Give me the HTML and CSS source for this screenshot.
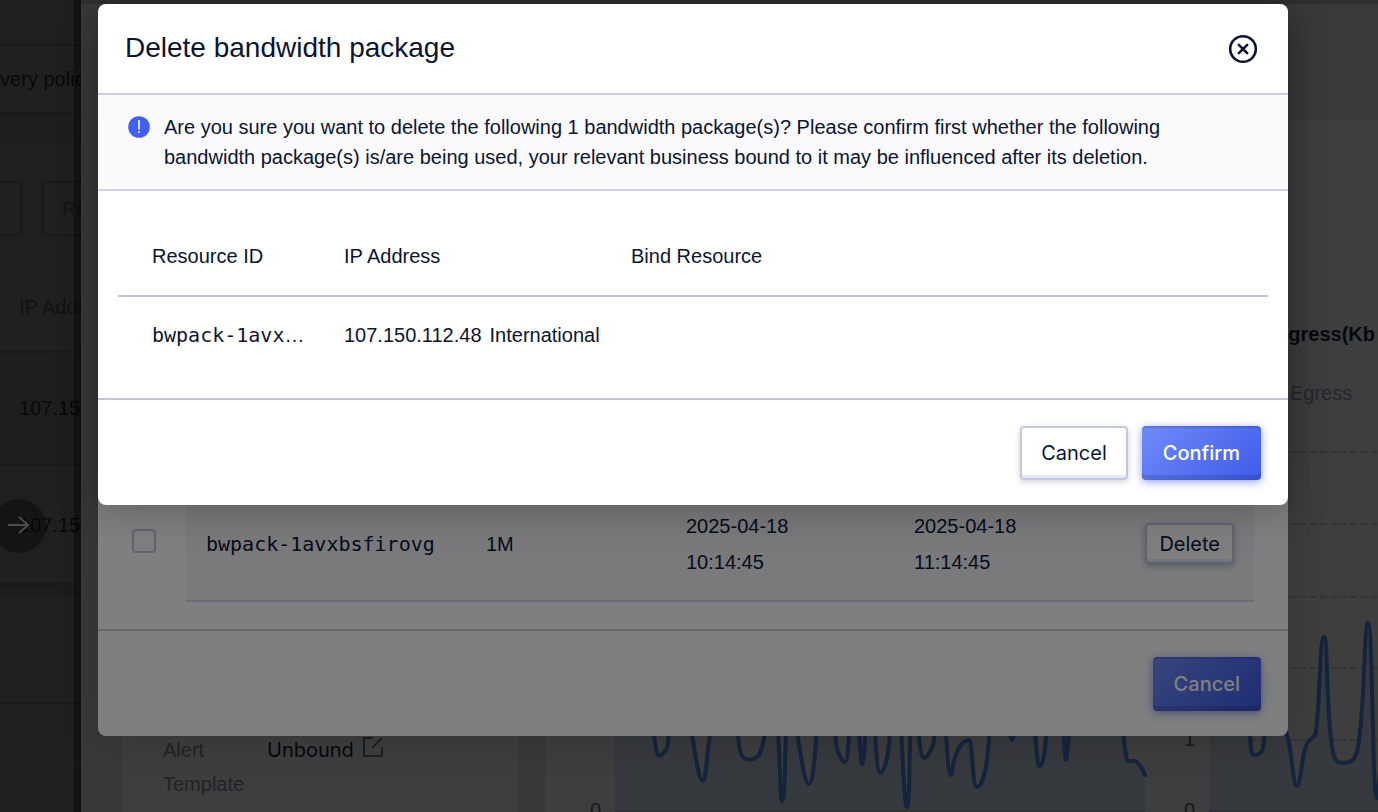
FILE: index.html
```html
<!DOCTYPE html>
<html lang="en">
<head>
    <meta charset="UTF-8">
    <meta name="viewport" content="width=device-width, initial-scale=1.0">
    <title>Bandwidth package</title>
    <link rel="stylesheet" href="styles.css">
</head>
<body>
    <!-- Page and drawer, both dimmed -->
    <div class="page">
        <div class="list">
            <div class="list-top"></div>
            <div class="list-tabs"><span>overy policy</span></div>
            <div class="list-gap"></div>
            <div class="list-tools">
                <span class="tool"></span>
                <span class="tool tool-text">Re</span>
            </div>
            <div class="list-row list-head">IP Address</div>
            <div class="list-row list-odd">107.150</div>
            <div class="list-row">107.155</div>
            <div class="list-band"></div>
            <div class="list-foot"></div>
            <button class="arrow-btn" aria-label="Expand">
                <svg width="22" height="20" viewBox="0 0 22 20"><path d="M0 10H20M11 2L20 10L11 18" /></svg>
            </button>
        </div>
        <div class="drawer">
            <div class="drawer-head"></div>
            <div class="drawer-body">
                <div class="panel info">
                    <dl>
                        <dt>Alert Template</dt>
                        <dd>Unbound
                            <svg width="20" height="20" viewBox="0 0 20 20"><path d="M10 1H1V19H19V10M9 11L19 1" /></svg>
                        </dd>
                    </dl>
                </div>
                <div class="panel chart">
                    <svg width="833" height="692" viewBox="545 120 833 692">
                        <g class="grid">
                            <path d="M1210 452H1378M1210 524H1378M1210 597H1378M1210 668H1378M1210 740H1378" />
                        </g>
                        <path class="area" d="M615 700H650C653 720 655 756 659 756C660 756 665 752 667 748C669 742 670 700 680 700C692 700 695 781 703 781C708 781 707 700 725 700C738 700 737 745 741 754C744 761 752 761 757 757C768 748 764 700 771 700C781 700 779 801 782 801C787 801 783 700 791 700C797 700 796 728 799 745C802 762 805 784 809 784C816 784 815 700 825 700C836 700 834 744 838 752C840 757 843 762 845 762C850 762 848 700 854 700C859 700 860 764 862 764C866 764 864 700 870 700C876 700 875 773 880 773C884 773 888 757 889 744C891 720 892 700 897 700C902 700 903 807 907 807C911 807 908 700 914 700C918 700 918 758 924 758C927 758 933 748 934 740C936 720 935 700 940 700C947 700 946 775 951 775C952 775 953 759 957 752C960 744 965 740 969 740C973 742 972 787 977 787C982 787 986 770 988 751C990 730 990 700 1000 700C1008 700 1009 740 1012 740C1014 740 1016 700 1025 700C1036 700 1036 766 1039 766C1044 766 1045 748 1046 736C1048 715 1050 700 1055 700C1064 700 1064 760 1066 760C1068 760 1068 700 1080 700H1110C1124 700 1123 748 1127 759C1128 763 1131 760 1135 761C1139 763 1143 770 1145 775V812H615Z" />
                        <path class="line" d="M650 700C653 720 655 756 659 756C660 756 665 752 667 748C669 742 670 700 680 700C692 700 695 781 703 781C708 781 707 700 725 700C738 700 737 745 741 754C744 761 752 761 757 757C768 748 764 700 771 700C781 700 779 801 782 801C787 801 783 700 791 700C797 700 796 728 799 745C802 762 805 784 809 784C816 784 815 700 825 700C836 700 834 744 838 752C840 757 843 762 845 762C850 762 848 700 854 700C859 700 860 764 862 764C866 764 864 700 870 700C876 700 875 773 880 773C884 773 888 757 889 744C891 720 892 700 897 700C902 700 903 807 907 807C911 807 908 700 914 700C918 700 918 758 924 758C927 758 933 748 934 740C936 720 935 700 940 700C947 700 946 775 951 775C952 775 953 759 957 752C960 744 965 740 969 740C973 742 972 787 977 787C982 787 986 770 988 751C990 730 990 700 1000 700C1008 700 1009 740 1012 740C1014 740 1016 700 1025 700C1036 700 1036 766 1039 766C1044 766 1045 748 1046 736C1048 715 1050 700 1055 700C1064 700 1064 760 1066 760C1068 760 1068 700 1080 700H1110C1124 700 1123 748 1127 759C1128 763 1131 760 1135 761C1139 763 1143 770 1145 775" />
                        <path class="area" d="M1209 700H1246C1250 715 1250 755 1253 755C1257 755 1260 754 1262 751C1265 745 1266 700 1274 700C1281 700 1284 725 1287 735C1292 750 1293 786 1297 786C1301 786 1302 748 1308 742C1311 739 1312 739 1315 735C1320 720 1319 637 1324 637C1328 637 1326 700 1331 738C1333 758 1335 763 1342 763C1350 763 1357 762 1359 740C1365 700 1364 623 1368 623C1373 623 1372 798 1377 798L1380 770V812H1209Z" />
                        <path class="line" d="M1246 700C1250 715 1250 755 1253 755C1257 755 1260 754 1262 751C1265 745 1266 700 1274 700C1281 700 1284 725 1287 735C1292 750 1293 786 1297 786C1301 786 1302 748 1308 742C1311 739 1312 739 1315 735C1320 720 1319 637 1324 637C1328 637 1326 700 1331 738C1333 758 1335 763 1342 763C1350 763 1357 762 1359 740C1365 700 1364 623 1368 623C1373 623 1372 798 1377 798L1380 770" />
                        <path class="axis" d="M615 811H1145M1209 811H1378" />
                        <text class="chart-title" x="1275" y="341">Egress(Kb</text>
                        <text class="legend" x="1290" y="400">Egress</text>
                        <text class="tick" x="590" y="817">0</text>
                        <text class="tick" x="1184" y="746">1</text>
                        <text class="tick" x="1184" y="817">0</text>
                    </svg>
                </div>
            </div>
        </div>
    </div>

    <!-- First dialog, dimmed by the second -->
    <div class="overlay">
        <div class="dialog dialog-back">
            <div class="back-body">
                <table class="back-table">
                    <tr>
                        <td class="col-check"><input type="checkbox" aria-label="Select bwpack-1avxbsfirovg"></td>
                        <td class="col-id mono">bwpack-1avxbsfirovg</td>
                        <td class="col-size">1M</td>
                        <td class="col-date">2025-04-18<br>10:14:45</td>
                        <td class="col-date">2025-04-18<br>11:14:45</td>
                        <td class="col-action"><button class="btn btn-small">Delete</button></td>
                    </tr>
                </table>
            </div>
            <div class="dialog-foot">
                <button class="btn btn-primary">Cancel</button>
            </div>
        </div>
    </div>

    <!-- Delete dialog -->
    <div class="overlay">
        <div class="dialog dialog-front" role="dialog" aria-labelledby="title">
            <div class="dialog-head">
                <h2 id="title">Delete bandwidth package</h2>
                <button class="close-btn" aria-label="Close">
                    <svg width="30" height="30" viewBox="0 0 30 30"><circle cx="15" cy="15" r="12.8" /><path d="M10.8 10.8L19.2 19.2M19.2 10.8L10.8 19.2" /></svg>
                </button>
            </div>
            <div class="notice">
                <svg width="22" height="22" viewBox="0 0 22 22"><circle cx="11" cy="11" r="10.8" /><path d="M10.2 4H11.8V13.5H10.2ZM10.2 15.2H11.8V17H10.2Z" /></svg>
                <p>Are you sure you want to delete the following 1 bandwidth package(s)? Please confirm first whether the following bandwidth package(s) is/are being used, your relevant business bound to it may be influenced after its deletion.</p>
            </div>
            <div class="dialog-body">
                <table class="front-table">
                    <thead>
                        <tr>
                            <th class="col-resource">Resource ID</th>
                            <th class="col-ip">IP Address</th>
                            <th>Bind Resource</th>
                        </tr>
                    </thead>
                    <tbody>
                        <tr>
                            <td class="col-resource"><span class="mono">bwpack-1avx</span>…</td>
                            <td class="col-ip"><span>107.150.112.48</span><span>International</span></td>
                            <td></td>
                        </tr>
                    </tbody>
                </table>
            </div>
            <div class="dialog-foot">
                <button class="btn">Cancel</button>
                <button class="btn btn-primary">Confirm</button>
            </div>
        </div>
    </div>
</body>
</html>
```
FILE: styles.css
```css
* {
    padding: 0;
    margin: 0;
    box-sizing: border-box;
}
body {
    font-family: "Liberation Sans", Arial, sans-serif;
    font-size: 20px;
    color: #0b1531;
    background-color: #1f1f1f;
    height: 100vh;
    overflow: hidden;
}
button {
    font-family: inherit;
    cursor: pointer;
}
.mono {
    font-family: "DejaVu Sans Mono", monospace;
}
.page {
    display: flex;
    height: 100vh;
}

/* List on the left */
.list {
    position: relative;
    flex: none;
    width: 81px;
    overflow: hidden;
    white-space: nowrap;
    color: #08090c;
    background-color: #202020;
    display: flex;
    flex-direction: column;
}
.list::after {
    content: "";
    position: absolute;
    top: 0;
    right: 0;
    bottom: 0;
    width: 7px;
    background-color: rgba(0, 0, 0, 0.35);
}
.list-top {
    height: 46px;
    border-bottom: 2px solid #1b1b1b;
}
.list-tabs {
    height: 68px;
    line-height: 66px;
    border-bottom: 2px solid #1b1b1b;
}
.list-tabs span {
    margin-left: -11px;
}
.list-gap {
    height: 27px;
    background-color: #1e1e1e;
}
.list-tools {
    display: flex;
    gap: 20px;
    height: 122px;
    padding-top: 40px;
}
.tool {
    flex: none;
    width: 22px;
    height: 55px;
    border: 2px solid #1a1a1a;
    border-left: none;
    border-radius: 0 4px 4px 0;
}
.tool-text {
    width: 120px;
    padding-left: 18px;
    line-height: 53px;
    border-left: 2px solid #1a1a1a;
    border-radius: 4px;
    color: #151516;
}
.list-row {
    height: 119px;
    padding-left: 19px;
    line-height: 119px;
    border-bottom: 2px solid #1a1a1a;
}
.list-head {
    height: 90px;
    line-height: 88px;
    color: #101214;
}
.list-odd {
    height: 113px;
    line-height: 111px;
    background-color: #1e1e1e;
}
.list-band {
    height: 11px;
    background-color: #1c1c1c;
}
.list-foot {
    height: 108px;
    border-bottom: 2px solid #1a1a1a;
}
.arrow-btn {
    position: absolute;
    left: -8px;
    top: 499px;
    width: 54px;
    height: 54px;
    border: none;
    border-radius: 50%;
    background-color: rgba(0, 0, 0, 0.35);
}
.arrow-btn svg {
    fill: none;
    stroke: #4c4c4c;
    stroke-width: 2;
}

/* Drawer with the charts */
.drawer {
    flex: 1;
    min-width: 0;
    background-color: #39393b;
    display: flex;
    flex-direction: column;
    overflow: hidden;
}
.drawer-head {
    flex: none;
    height: 120px;
    border-top: 4px solid #303033;
    background-color: #3a3a3c;
}
.drawer-body {
    flex: 1;
    display: flex;
    gap: 27px;
    padding-left: 41px;
    min-height: 0;
}
.panel {
    background-color: #3e3e3e;
}
.info {
    flex: none;
    width: 396px;
    display: flex;
    align-items: flex-end;
}
.info dl {
    display: flex;
    padding: 0 0 11px 41px;
    line-height: 34px;
}
.info dt {
    width: 104px;
    padding-right: 10px;
    color: #202327;
}
.info dd {
    font-family: Inter, sans-serif;
    color: #06070d;
}
.info svg {
    margin-left: 4px;
    fill: none;
    stroke: #1c1f24;
    stroke-width: 2;
}
.chart {
    flex: 1;
    overflow: hidden;
}
.chart svg {
    display: block;
}
.grid path {
    stroke: #333338;
    stroke-width: 2;
    stroke-dasharray: 7 3;
}
.area {
    fill: #36393d;
}
.line {
    fill: none;
    stroke: #15243d;
    stroke-width: 4;
    stroke-linecap: round;
}
.axis {
    stroke: #2f3338;
    stroke-width: 2;
}
.chart-title {
    font-weight: bold;
    fill: #070911;
}
.legend {
    fill: #232630;
}
.tick {
    fill: #17181c;
}

/* Dialogs */
.overlay {
    position: absolute;
    inset: 0;
    padding: 4px 90px 0 98px;
}
.dialog {
    border-radius: 8px;
}
.dialog-front {
    background-color: #fff;
    box-shadow: 0 4px 40px rgba(0, 0, 0, 0.25);
}
.dialog-back {
    background-color: #7f7f7f;
    box-shadow: 0 4px 40px rgba(0, 0, 0, 0.15);
    color: #060b1a;
}
.dialog-head {
    display: flex;
    justify-content: space-between;
    align-items: center;
    height: 91px;
    padding: 0 30px 0 27px;
    border-bottom: 2px solid #c9cce0;
}
.dialog-head h2 {
    padding-bottom: 2px;
    font-size: 28px;
    font-weight: 400;
}
.close-btn {
    width: 30px;
    height: 30px;
    border: none;
    background-color: transparent;
}
.close-btn svg {
    display: block;
    fill: none;
    stroke: #0b1531;
    stroke-width: 2.6;
    stroke-linecap: round;
}
.notice {
    display: flex;
    gap: 14px;
    padding: 17px 100px 17px 30px;
    line-height: 30px;
    background-color: #fafafc;
    border-bottom: 2px solid #d0d3e8;
}
.notice svg {
    flex: none;
    margin-top: 4px;
    fill: #4160f0;
}
.notice svg path {
    fill: #fff;
}
.dialog-body {
    padding: 27px 20px 25px;
}
.front-table {
    width: 100%;
    table-layout: fixed;
    border-collapse: collapse;
    text-align: left;
}
.front-table th {
    height: 78px;
    font-weight: 400;
    border-bottom: 2px solid #c3c6d8;
}
.front-table td {
    height: 77px;
}
.front-table .col-resource {
    width: 226px;
    padding-left: 34px;
}
.front-table .col-ip {
    width: 287px;
    white-space: nowrap;
}
.col-ip span + span {
    margin-left: 8px;
}
.dialog-foot {
    display: flex;
    justify-content: flex-end;
    gap: 14px;
    padding: 26px 27px 25px;
    border-top: 2px solid #c3c6d8;
}
.btn {
    height: 54px;
    padding: 0 19px;
    font-family: Inter, sans-serif;
    font-size: 20px;
    color: #0b1531;
    background-color: #fff;
    border: 2px solid #c3c8dc;
    border-radius: 4px;
    box-shadow: inset 0 -3px 0 #e4e8fb, 0 2px 6px rgba(20, 30, 70, 0.2);
}
.btn-primary {
    padding: 0 21px;
    font-weight: 500;
    color: #fff;
    border: none;
    background-image: linear-gradient(135deg, #6f8bf7, #3f5bea);
    box-shadow: inset 0 2px 0 rgba(0, 0, 0, 0.12), inset 0 -5px 0 rgba(0, 0, 0, 0.12), 0 2px 8px rgba(65, 91, 234, 0.6);
}
.dialog-back .dialog-foot {
    border-color: #65686e;
}
.dialog-back .btn-primary {
    color: #808080;
    background-image: linear-gradient(135deg, #38457d, #1f2d75);
    box-shadow: inset 0 2px 0 rgba(0, 0, 0, 0.12), inset 0 -5px 0 rgba(0, 0, 0, 0.12), 0 2px 8px rgba(32, 45, 117, 0.6);
}
.back-body {
    padding: 483px 34px 27px 20px;
}
.back-table {
    width: 100%;
    table-layout: fixed;
    border-collapse: collapse;
}
.back-table td {
    height: 114px;
    line-height: 36px;
    background-color: #7a7a7c;
    border-bottom: 2px solid #696c79;
}
.back-table .col-check {
    width: 68px;
    padding: 0 0 6px 14px;
    background-color: transparent;
    border-bottom: none;
}
.back-table .col-id {
    width: 300px;
    padding-left: 20px;
}
.back-table .col-size {
    width: 200px;
}
.back-table .col-date {
    width: 228px;
}
.back-table .col-action {
    text-align: right;
    padding-right: 20px;
}
.back-table input {
    display: block;
    appearance: none;
    width: 24px;
    height: 24px;
    border: 2px solid #61656f;
    border-radius: 4px;
}
.btn-small {
    height: 41px;
    padding: 0 12px;
    color: #060b1a;
    background-color: #7f7f7f;
    border-color: #61646f;
    box-shadow: inset 0 -3px 0 #72747e, 0 2px 6px rgba(10, 15, 35, 0.3);
}
```
